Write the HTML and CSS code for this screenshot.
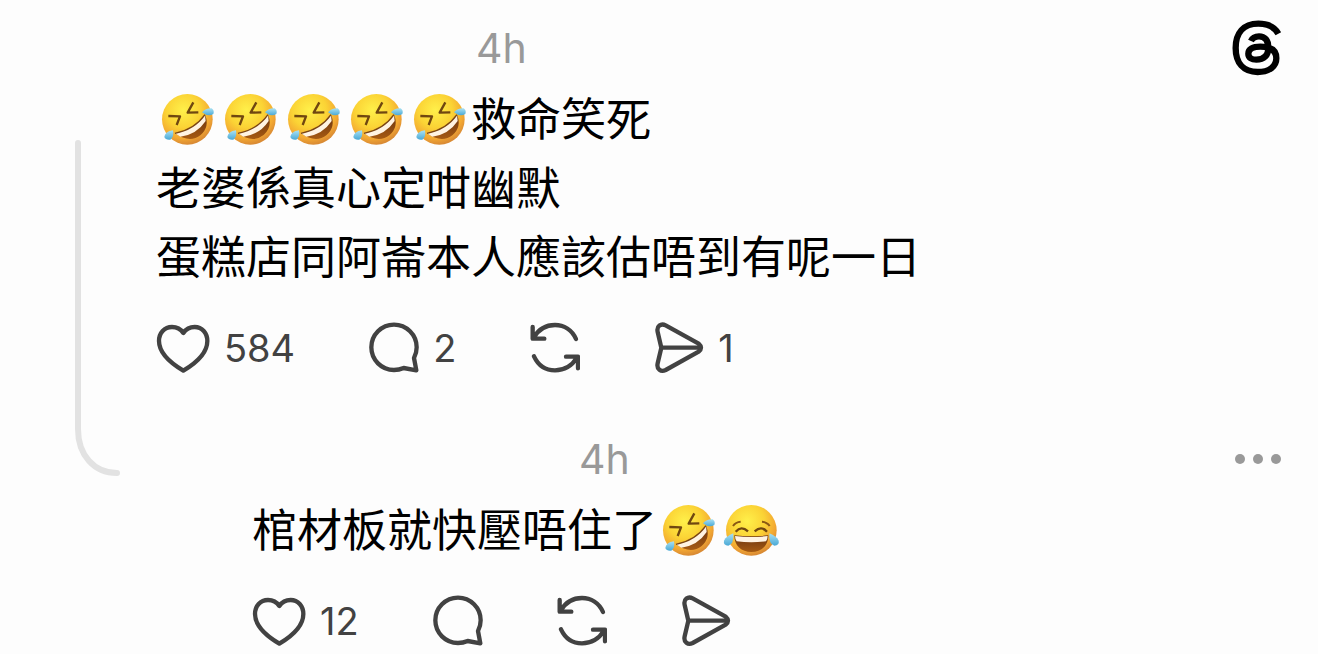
FILE: index.html
```html
<!DOCTYPE html>
<html lang="zh-HK">
<head>
    <meta charset="UTF-8">
    <meta name="viewport" content="width=device-width, initial-scale=1.0">
    <title>Threads</title>
    <link rel="stylesheet" href="styles.css">
</head>
<body>
    <!-- Shared icons -->
    <svg class="sprite" aria-hidden="true">
        <defs>
            <radialGradient id="face" cx="42%" cy="32%" r="68%">
                <stop offset="0" stop-color="#fff04a"/>
                <stop offset="0.5" stop-color="#fbd335"/>
                <stop offset="0.82" stop-color="#f3a832"/>
                <stop offset="1" stop-color="#d98a34"/>
            </radialGradient>
            <linearGradient id="tear" x1="0" y1="0" x2="0" y2="1">
                <stop offset="0" stop-color="#a9e1f3"/>
                <stop offset="1" stop-color="#4aa9d6"/>
            </linearGradient>
            <linearGradient id="mouth" x1="0" y1="0" x2="0" y2="1">
                <stop offset="0" stop-color="#6b3410"/>
                <stop offset="1" stop-color="#a65a12"/>
            </linearGradient>
        </defs>
        <symbol id="icon-heart" viewBox="0 0 162 162">
            <path d="M82 36C74 24 62 18 48 18C25 18 9 36 9 60C9 92 40 124 82 149C124 124 154 92 154 60C154 36 138 18 116 18C102 18 90 24 82 36Z"/>
        </symbol>
        <symbol id="icon-comment" viewBox="0 0 150 162">
            <path d="M142 148L135 111Q143 96 143 79A68 68 0 1 0 75 147Q90 147 104 141Z"/>
        </symbol>
        <symbol id="icon-repost" viewBox="0 0 150 162">
            <path d="M138 54C126 26 101 12 75 12C48 12 25 26 11 50M8 18V53H43"/>
            <path d="M12 106C25 134 48 148 75 148C102 148 126 134 141 110M108 107H144V142"/>
        </symbol>
        <symbol id="icon-send" viewBox="0 0 150 162">
            <path d="M22 80L11 33C7 15 21 6 35 13L134 68Q148 80 134 92L35 147C21 154 7 145 11 127ZM22 80H138"/>
        </symbol>
        <symbol id="emoji-rofl" viewBox="0 0 189 168">
            <circle cx="94" cy="85" r="76" fill="url(#face)"/>
            <path d="M57 127Q115 116 147 71Q162 106 134 132Q101 158 57 127Z" fill="url(#mouth)"/>
            <path d="M57 127Q115 116 147 71L149 90Q122 131 73 137Z" fill="#fff3e2"/>
            <path d="M57 127Q115 116 147 71" fill="none" stroke="#7a4513" stroke-width="4"/>
            <path d="M37 75L72 76L62 102M112 34L95 65L127 64" fill="none" stroke="#704710" stroke-width="7" stroke-linejoin="round"/>
            <path d="M138 64Q149 51 167 52Q176 59 172 69Q157 79 138 64Z" fill="url(#tear)"/>
            <path d="M51 118Q55 137 43 146Q29 148 25 138Q27 121 51 118Z" fill="url(#tear)"/>
        </symbol>
        <symbol id="emoji-joy" viewBox="0 0 189 168">
            <circle cx="94" cy="85" r="76" fill="url(#face)"/>
            <path d="M43 100Q94 106 145 100C145 132 124 150 94 150C64 150 43 132 43 100Z" fill="url(#mouth)"/>
            <path d="M45 102Q94 108 143 102Q143 112 138 118Q94 124 50 118Q45 112 45 102Z" fill="#fff3e2"/>
            <path d="M39 72Q47 60 62 59M126 59Q141 60 149 72" fill="none" stroke="#8a5814" stroke-width="6"/>
            <path d="M47 89Q64 70 84 88M104 88Q124 70 141 89" fill="none" stroke="#704710" stroke-width="7"/>
            <path d="M40 94Q42 128 25 131Q9 130 12 116Q19 102 40 94Z" fill="url(#tear)"/>
            <path d="M148 94Q146 128 163 131Q179 130 176 116Q169 102 148 94Z" fill="url(#tear)"/>
        </symbol>
    </svg>

    <main class="thread">
        <div class="rail">
            <svg width="46" height="338" viewBox="0 0 46 338" aria-hidden="true">
                <path d="M3 3V289C3 315 19 333 42 333"/>
            </svg>
        </div>

        <article class="post">
            <header class="post-header">
                <span class="author"></span>
                <time class="time">4h</time>
                <a class="logo" href="#" aria-label="Threads">
                    <svg width="50" height="56" viewBox="66 30 150 168">
                        <path d="M205 71C193 49 171 41 145 41C100 41 77 70 77 114C77 158 100 186 143 186C178 186 199 169 199 145C199 120 180 110 151 110C128 110 115 118 115 131C115 143 125 149 139 149C162 149 175 136 175 113C175 90 164 79 147 79C136 79 127 84 123 93"/>
                    </svg>
                </a>
            </header>
            <p class="text"><svg class="emoji" role="img" aria-label="🤣"><use href="#emoji-rofl"/></svg><svg class="emoji" role="img" aria-label="🤣"><use href="#emoji-rofl"/></svg><svg class="emoji" role="img" aria-label="🤣"><use href="#emoji-rofl"/></svg><svg class="emoji" role="img" aria-label="🤣"><use href="#emoji-rofl"/></svg><svg class="emoji" role="img" aria-label="🤣"><use href="#emoji-rofl"/></svg>救命笑死<br>老婆係真心定咁幽默<br>蛋糕店同阿崙本人應該估唔到有呢一日</p>
            <div class="actions">
                <button class="action" aria-label="Like"><svg class="icon icon-wide"><use href="#icon-heart"/></svg>584</button>
                <button class="action" aria-label="Reply"><svg class="icon"><use href="#icon-comment"/></svg>2</button>
                <button class="action" aria-label="Repost"><svg class="icon"><use href="#icon-repost"/></svg></button>
                <button class="action" aria-label="Share"><svg class="icon"><use href="#icon-send"/></svg>1</button>
            </div>
        </article>

        <article class="post reply">
            <header class="post-header">
                <span class="author"></span>
                <time class="time">4h</time>
                <button class="more" aria-label="More">
                    <svg width="48" height="10" viewBox="0 0 48 10">
                        <circle cx="6" cy="5" r="5"/>
                        <circle cx="24" cy="5" r="5"/>
                        <circle cx="42" cy="5" r="5"/>
                    </svg>
                </button>
            </header>
            <p class="text">棺材板就快壓唔住了<svg class="emoji" role="img" aria-label="🤣"><use href="#emoji-rofl"/></svg><svg class="emoji" role="img" aria-label="😂"><use href="#emoji-joy"/></svg></p>
            <div class="actions">
                <button class="action" aria-label="Like"><svg class="icon icon-wide"><use href="#icon-heart"/></svg>12</button>
                <button class="action" aria-label="Reply"><svg class="icon"><use href="#icon-comment"/></svg></button>
                <button class="action" aria-label="Repost"><svg class="icon"><use href="#icon-repost"/></svg></button>
                <button class="action" aria-label="Share"><svg class="icon"><use href="#icon-send"/></svg></button>
            </div>
        </article>
    </main>
</body>
</html>
```
FILE: styles.css
```css
* {
    box-sizing: border-box;
}
body {
    margin: 0;
    background: #fdfdfd;
    color: #000;
    font-family: Inter, "Noto Sans CJK TC", sans-serif;
}
.sprite {
    position: absolute;
    width: 0;
    height: 0;
}
.thread {
    display: grid;
    grid-template-columns: 156px 1fr;
    row-gap: 50px;
    padding: 14px 36px 0 0;
}
.rail {
    grid-row: 1 / 3;
    padding: 126px 0 0 75px;
}
.rail svg {
    display: block;
    fill: none;
    stroke: #e2e2e2;
    stroke-width: 6;
    stroke-linecap: round;
}
.post {
    grid-column: 2;
}
.reply {
    padding-left: 96px;
}
.post-header {
    display: flex;
    align-items: center;
    height: 68px;
}
.author {
    width: 320px;
}
.reply .author {
    width: 327px;
}
.time {
    color: #999;
    font-size: 41px;
}
.logo, .more {
    margin-left: auto;
}
.logo svg {
    display: block;
    fill: none;
    stroke: #000;
    stroke-width: 19;
}
.text {
    margin: 0;
    font-family: "Noto Sans CJK TC", sans-serif;
    font-size: 45px;
    line-height: 69px;
}
.emoji {
    width: 63px;
    height: 56px;
    vertical-align: -11px;
}
.actions {
    display: flex;
    gap: 74px;
    margin-top: 32px;
}
button {
    padding: 0;
    border: none;
    background: none;
    cursor: pointer;
}
.action {
    display: flex;
    align-items: center;
    gap: 14px;
    color: #424242;
    font-family: Inter, sans-serif;
    font-size: 38px;
    line-height: 54px;
}
.icon {
    width: 50px;
    height: 54px;
    fill: none;
    stroke: currentColor;
    stroke-width: 13;
    stroke-linecap: round;
    stroke-linejoin: round;
}
.icon-wide {
    width: 54px;
}
.more svg {
    display: block;
    fill: #999;
}
```
